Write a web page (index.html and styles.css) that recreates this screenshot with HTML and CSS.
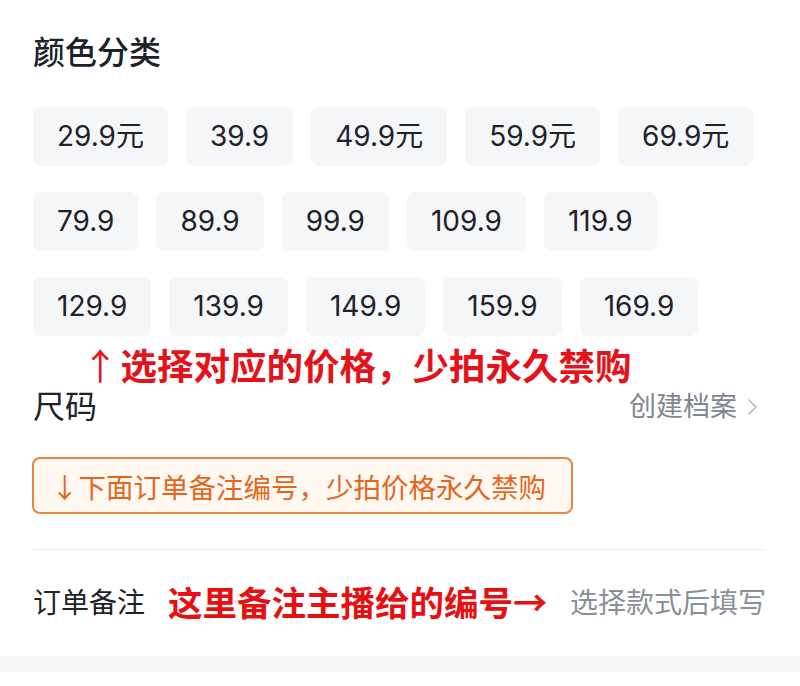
FILE: index.html
```html
<!DOCTYPE html>
<html lang="zh-CN">

<head>
    <meta charset="UTF-8">
    <meta name="viewport" content="width=device-width, initial-scale=1.0">
    <title>选择规格</title>
    <link rel="stylesheet" href="styles.css">
</head>

<body>
    <div class="sheet">
        <h2 class="section-title">颜色分类</h2>

        <div class="chips">
            <div class="chip-row">
                <button class="chip">29.9元</button>
                <button class="chip">39.9</button>
                <button class="chip">49.9元</button>
                <button class="chip">59.9元</button>
                <button class="chip">69.9元</button>
            </div>
            <div class="chip-row">
                <button class="chip">79.9</button>
                <button class="chip">89.9</button>
                <button class="chip">99.9</button>
                <button class="chip">109.9</button>
                <button class="chip">119.9</button>
            </div>
            <div class="chip-row">
                <button class="chip">129.9</button>
                <button class="chip">139.9</button>
                <button class="chip">149.9</button>
                <button class="chip">159.9</button>
                <button class="chip">169.9</button>
            </div>
        </div>

        <p class="hint-red"><span class="arrow">↑</span>选择对应的价格，少拍永久禁购</p>

        <div class="size-head">
            <h2 class="section-title size-title">尺码</h2>
            <a class="profile-link" href="#">创建档案
                <svg class="chevron" width="11" height="20" viewBox="0 0 11 20">
                    <path d="M2 3l7 7-7 7" fill="none" stroke="currentColor" stroke-width="1.6" stroke-linecap="round" stroke-linejoin="round" />
                </svg>
            </a>
        </div>

        <div class="notice"><span class="arrow">↓</span>下面订单备注编号，少拍价格永久禁购</div>

        <div class="divider"></div>

        <div class="remark-row">
            <span class="remark-label">订单备注</span>
            <span class="remark-hint">这里备注主播给的编号<span class="arrow">→</span></span>
            <span class="remark-input">选择款式后填写</span>
        </div>
    </div>

    <div class="footer-gap"></div>
</body>

</html>
```

FILE: styles.css
```css
body {
    margin: 0;
    background-color: #fff;
    color: #1d2129;
    font-family: Roboto, "Noto Sans CJK SC", sans-serif;
}

.sheet {
    padding: 35px 34px 0 33px;
}

.section-title {
    margin: 0;
    font-size: 32px;
    font-weight: 500;
    line-height: 36px;
    color: #1d2129;
}

/* 价格选项 */
.chips {
    margin-top: 36px;
    display: flex;
    flex-direction: column;
    gap: 26px;
}

.chip-row {
    display: flex;
    gap: 18px;
}

.chip {
    height: 59px;
    padding: 0 24px;
    border: none;
    border-radius: 8px;
    background-color: #f5f6f8;
    color: #1f2329;
    font-family: Inter, "Noto Sans CJK SC", sans-serif;
    font-size: 28px;
    line-height: 59px;
    cursor: pointer;
}

.arrow {
    font-family: "Noto Sans CJK SC", sans-serif;
    font-weight: 400;
}

.hint-red {
    margin: 7px 0 0 49px;
    font-size: 36.5px;
    font-weight: 700;
    line-height: 43px;
    color: #e5121a;
}

.hint-red .arrow {
    margin-right: 2px;
}

.size-head {
    display: flex;
    justify-content: space-between;
    align-items: center;
}

.size-title {
    font-weight: 400;
}

.profile-link {
    display: flex;
    align-items: center;
    gap: 10px;
    margin-right: 8px;
    font-size: 27px;
    line-height: 36px;
    color: #80868f;
    text-decoration: none;
}

.chevron {
    color: #b3b7bd;
}

/* 橙色提示框 */
.notice {
    display: inline-flex;
    align-items: center;
    box-sizing: border-box;
    height: 57px;
    margin: 32px 0 0 -1px;
    padding: 0 25px 0 17px;
    border: 2px solid #ea8443;
    border-radius: 8px;
    background-color: #fff8f1;
    color: #e2671d;
    font-size: 27.5px;
}

.divider {
    height: 1px;
    margin-top: 35px;
    background-color: #ededf0;
}

.remark-row {
    display: flex;
    align-items: center;
    padding: 26px 0 30px;
}

.remark-label {
    font-size: 28px;
    color: #1f2329;
}

.remark-hint {
    margin-left: 23px;
    font-size: 34.5px;
    font-weight: 700;
    color: #e60f12;
}

.remark-hint .arrow {
    font-weight: 700;
}

.remark-input {
    margin-left: auto;
    font-size: 28px;
    color: #8a8f98;
}

.footer-gap {
    height: 16px;
    margin-bottom: 12px;
    background-color: #f3f4f6;
}
```
